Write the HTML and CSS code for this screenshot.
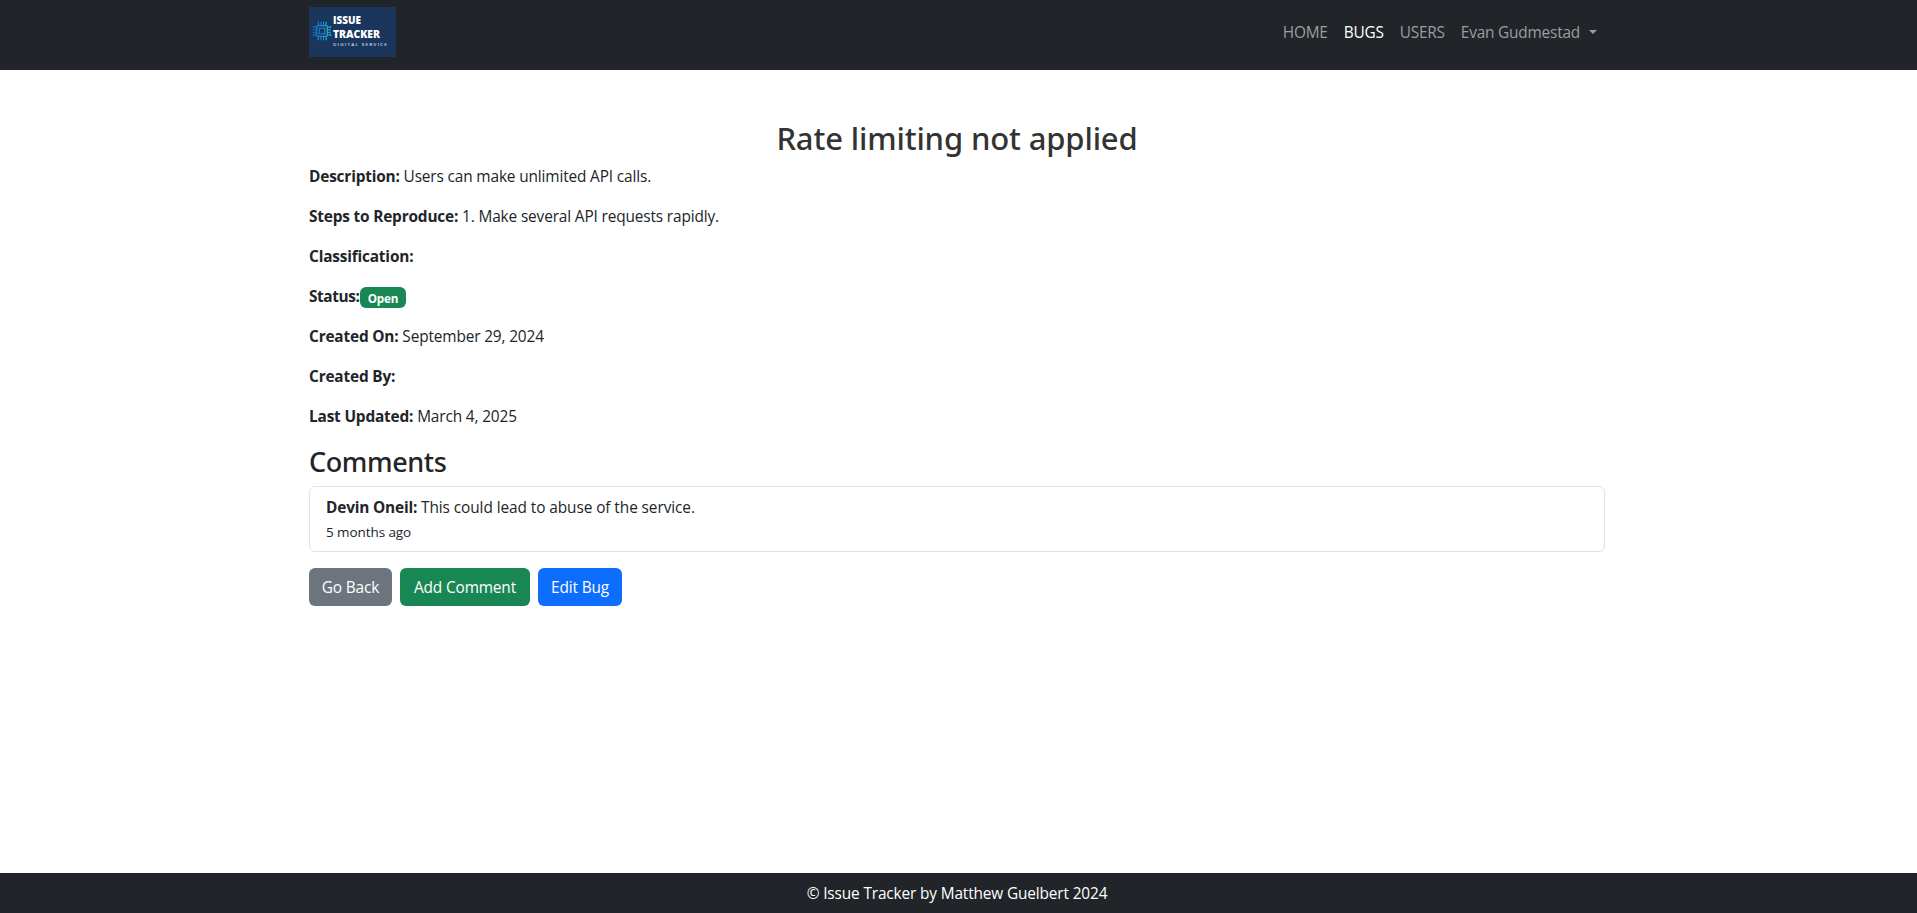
FILE: index.html
```
<!DOCTYPE html>
<html lang="en">
<head>
<meta charset="utf-8">
<title>Issue Tracker</title>
<link rel="stylesheet" href="styles.css">
</head>
<body>
<header class="site-header">
  <nav class="container navbar">
    <a class="brand" href="#" aria-label="Issue Tracker">
      <svg class="logo" viewBox="0 0 87 50" width="87" height="50">
        <defs>
          <linearGradient id="chip" x1="3" y1="0" x2="22" y2="0" gradientUnits="userSpaceOnUse">
            <stop offset="0" stop-color="#1264c4"/>
            <stop offset="1" stop-color="#22b8d4"/>
          </linearGradient>
        </defs>
        <rect width="87" height="50" fill="#1a365d"/>
        <g fill="none" stroke="url(#chip)" stroke-width="1">
          <rect x="7.7" y="18.7" width="10.6" height="10.6" rx="1" stroke-width="1.3"/>
          <rect x="10.2" y="21.2" width="5.6" height="5.6"/>
          <path d="M9.5 18.5V16M12 18.5V14.8M14.5 18.5V14.8M17 18.5V16M9.5 29.5V32M12 29.5V33.2M14.5 29.5V33.2M17 29.5V32M7.5 20.2H5M7.5 22.8H3.8M7.5 25.3H3.8M7.5 27.8H5M18.5 20.2H21M18.5 22.8H22M18.5 25.3H22M18.5 27.8H21"/>
        </g>
        <g fill="url(#chip)">
          <circle cx="9.2" cy="15.6" r=".9"/><circle cx="17.2" cy="15.6" r=".9"/>
          <circle cx="9.2" cy="32.4" r=".9"/><circle cx="17.2" cy="32.4" r=".9"/>
          <circle cx="4.6" cy="20" r=".9"/><circle cx="4.6" cy="28" r=".9"/>
          <circle cx="21.4" cy="20" r=".9"/><circle cx="21.4" cy="28" r=".9"/>
        </g>
        <text class="logo-word" x="24" y="17" textLength="28" lengthAdjust="spacingAndGlyphs">ISSUE</text>
        <text class="logo-word" x="24" y="31" textLength="47" lengthAdjust="spacingAndGlyphs">TRACKER</text>
        <text class="logo-sub" x="24" y="39" textLength="55" lengthAdjust="spacingAndGlyphs">DIGITAL SERVICE</text>
      </svg>
    </a>
    <ul class="nav-links">
      <li><a href="#">HOME</a></li>
      <li><a class="active" href="#">BUGS</a></li>
      <li><a href="#">USERS</a></li>
      <li><a class="dropdown" href="#">Evan Gudmestad</a></li>
    </ul>
  </nav>
</header>

<main class="container bug">
  <h2 class="bug-title">Rate limiting not applied</h2>
  <p><strong>Description:</strong> Users can make unlimited API calls.</p>
  <p><strong>Steps to Reproduce:</strong> 1. Make several API requests rapidly.</p>
  <p><strong>Classification:</strong></p>
  <p class="status"><strong>Status:</strong><span class="badge">Open</span></p>
  <p><strong>Created On:</strong> September 29, 2024</p>
  <p><strong>Created By:</strong></p>
  <p><strong>Last Updated:</strong> March 4, 2025</p>

  <h3 class="comments-title">Comments</h3>
  <ul class="comments">
    <li class="comment">
      <div><strong>Devin Oneil:</strong> This could lead to abuse of the service.</div>
      <small>5 months ago</small>
    </li>
  </ul>

  <div class="actions">
    <a class="btn btn-secondary" href="#">Go Back</a>
    <a class="btn btn-success" href="#">Add Comment</a>
    <a class="btn btn-primary" href="#">Edit Bug</a>
  </div>
</main>

<footer class="site-footer">© Issue Tracker by Matthew Guelbert 2024</footer>
</body>
</html>
```
FILE: styles.css
```
* { box-sizing: border-box; }

body {
  margin: 0;
  min-height: 100vh;
  display: flex;
  flex-direction: column;
  font-family: "Segoe UI", "Open Sans", "Noto Sans", sans-serif;
  font-size: 15.4px;
  line-height: 24px;
  letter-spacing: -0.14px;
  color: #212529;
  background: #fff;
}

a { color: inherit; text-decoration: none; }
ul { list-style: none; margin: 0; padding: 0; }
strong { letter-spacing: -0.18px; }

.container {
  width: 1296px;
  margin: 0 312px 0 309px;
}

.site-header { height: 70px; background: #212529; }

.navbar {
  display: flex;
  justify-content: space-between;
  align-items: flex-start;
  padding-top: 7px;
}

.logo { display: block; }
.logo-word { font: 800 10.4px "Open Sans", sans-serif; fill: #fff; letter-spacing: 0; }
.logo-sub { font: 600 4px "Open Sans", sans-serif; fill: #d5dcea; letter-spacing: 1px; }

.nav-links {
  display: flex;
  gap: 16px;
  padding: 14px 8px 0 0;
  color: #9b9d9e;
  letter-spacing: -0.2px;
}
.nav-links .active { color: #fff; }

.dropdown { display: flex; align-items: center; }
.dropdown::after {
  content: "";
  margin: 0 0 2px 9px;
  border-top: 4.5px solid;
  border-left: 4.5px solid transparent;
  border-right: 4.5px solid transparent;
}

.bug { flex: 1; padding-top: 50px; }
.bug p { margin: 0 0 16px; }

.bug-title, .comments-title {
  margin: 0 0 9px;
  font-family: "Segoe UI", "Noto Sans", sans-serif;
  font-weight: 500;
}
.bug-title {
  font-size: 31px;
  line-height: 36px;
  text-align: center;
  color: #333;
}
.comments-title {
  margin-bottom: 7px;
  font-size: 27px;
  line-height: 34px;
  letter-spacing: -0.4px;
}

.status { display: flex; }
.status strong { width: 51px; letter-spacing: -0.4px; }
.badge {
  width: 46px;
  height: 21px;
  margin-top: 2px;
  border-radius: 6px;
  background: #198754;
  color: #fff;
  font-size: 11.7px;
  font-weight: 700;
  line-height: 22px;
  text-align: center;
}

.comments { border: 1px solid #dee2e6; border-radius: 6px; }
.comment {
  display: flex;
  flex-direction: column;
  height: 64px;
  padding: 9px 16px 7px;
  letter-spacing: -0.08px;
}
.comment small { font-size: 13.5px; }

.actions { display: flex; gap: 8px; margin-top: 16px; }
.btn {
  height: 38px;
  padding: 8px 0 6px;
  border-radius: 6px;
  color: #fff;
  text-align: center;
}
.btn-secondary { width: 83px; background: #6c757d; }
.btn-success { width: 130px; background: #198754; }
.btn-primary { width: 84px; background: #0d6efd; }

.site-footer {
  height: 40px;
  padding: 9px 3px 0 0;
  background: #212529;
  color: #fff;
  text-align: center;
}
```
